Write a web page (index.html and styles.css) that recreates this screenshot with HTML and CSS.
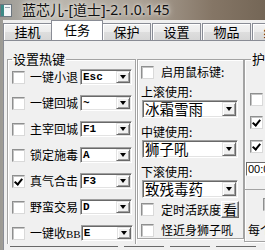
FILE: index.html
```html
<!DOCTYPE html>
<html lang="zh-CN">
<head>
  <meta charset="UTF-8">
  <title>蓝芯儿</title>
  <link rel="stylesheet" href="styles.css">
</head>
<body>
  <div class="window">
    <div class="titlebar">
      <svg class="app-icon" width="12" height="13" viewBox="0 0 12 13">
        <rect x="0.5" y="0.5" width="11" height="12" fill="#f4f6f8" stroke="#6d7780"/>
        <rect x="1" y="1" width="3" height="11" fill="#3d8a86"/>
        <rect x="5" y="3" width="5" height="1" fill="#9aa6b0"/>
      </svg>
      <span class="title">蓝芯儿-[道士]-2.1.0.145</span>
    </div>

    <div class="client">
      <div class="tabs">
        <div class="tab">挂机</div>
        <div class="tab active">任务</div>
        <div class="tab">保护</div>
        <div class="tab">设置</div>
        <div class="tab">物品</div>
        <div class="tab">组队</div>
      </div>

      <div class="page">
        <fieldset class="group hotkeys">
          <legend>设置热键</legend>
          <div class="row"><span class="check"></span><span class="label">一键小退</span><span class="combo key"><span class="val">Esc</span><span class="drop"></span></span></div>
          <div class="row"><span class="check"></span><span class="label">一键回城</span><span class="combo key"><span class="val">~</span><span class="drop"></span></span></div>
          <div class="row"><span class="check"></span><span class="label">主宰回城</span><span class="combo key"><span class="val">F1</span><span class="drop"></span></span></div>
          <div class="row"><span class="check"></span><span class="label">锁定施毒</span><span class="combo key"><span class="val">A</span><span class="drop"></span></span></div>
          <div class="row"><span class="check on"></span><span class="label">真气合击</span><span class="combo key"><span class="val">F3</span><span class="drop"></span></span></div>
          <div class="row"><span class="check"></span><span class="label">野蛮交易</span><span class="combo key"><span class="val">D</span><span class="drop"></span></span></div>
          <div class="row"><span class="check"></span><span class="label">一键收<span class="latin">BB</span></span><span class="combo key"><span class="val">E</span><span class="drop"></span></span></div>
        </fieldset>

        <fieldset class="group mouse">
          <div class="row-m first"><span class="check"></span><span class="label">启用鼠标键:</span></div>
          <div class="caption">上滚使用:</div>
          <span class="combo skill"><span class="val">冰霜雪雨</span><span class="drop"></span></span>
          <div class="caption">中键使用:</div>
          <span class="combo skill"><span class="val">狮子吼</span><span class="drop"></span></span>
          <div class="caption">下滚使用:</div>
          <span class="combo skill"><span class="val">致残毒药</span><span class="drop"></span></span>
          <div class="row-m timer"><span class="check"></span><span class="label">定时活跃度</span><span class="btn-look">看</span></div>
          <div class="row-m"><span class="check"></span><span class="label">怪近身狮子吼</span></div>
        </fieldset>

        <fieldset class="group protect">
          <legend>护理</legend>
          <span class="check p1"></span>
          <span class="check on p2"></span>
          <span class="check on p3"></span>
          <span class="edit">00:00</span>
          <div class="sub">
            <span class="check small"></span>
            <div class="sub-text">每个</div>
          </div>
        </fieldset>
      </div>

      <div class="buttons">
        <span class="button wide"></span>
        <span class="button"></span>
        <span class="button"></span>
        <span class="button"></span>
      </div>
    </div>
  </div>
</body>
</html>
```

FILE: styles.css
```css
body {
  margin: 0;
  width: 265px;
  height: 250px;
  overflow: hidden;
  font-family: "Noto Sans CJK SC", "Noto Sans", sans-serif;
  color: #000;
}
.window {
  height: 250px;
  display: flex;
  flex-direction: column;
  overflow: hidden;
  background: linear-gradient(90deg, #9c9a94 0%, #bcb8b0 20%, #a89e92 55%, #857666 80%, #746656 100%);
}
.titlebar {
  height: 20px;
  display: flex;
  align-items: center;
  flex-shrink: 0;
}
.app-icon {
  margin: 0 10px 0 0;
}
.title {
  font-family: "Noto Sans", "Noto Sans CJK SC", sans-serif;
  font-size: 14px;
  line-height: 16px;
  color: #101010;
  text-shadow: 0 0 6px #f4f2ee, 0 0 3px #eceae4;
}
.client {
  flex: 1;
  margin-left: 3px;
  display: flex;
  flex-direction: column;
  min-height: 0;
  min-width: 0;
  overflow: hidden;
}

/* tab strip */
.tabs {
  height: 20px;
  display: flex;
  align-items: flex-end;
  flex-shrink: 0;
  overflow: hidden;
  background: #f0f0f0;
}
.tab {
  width: 47px;
  height: 16px;
  margin-right: 1px;
  flex-shrink: 0;
  border: 1px solid #898c95;
  border-bottom: none;
  background: linear-gradient(#f3f3f3, #ebebeb 50%, #dedede 51%, #d6d6d6);
  box-shadow: inset 1px 1px #fff;
  font-size: 13px;
  line-height: 16px;
  text-align: center;
}
.tab.active {
  height: 19px;
  width: 50px;
  margin: 0 -1px 0 -2px;
  background: #fff;
  box-shadow: none;
  position: relative;
  z-index: 1;
  line-height: 18px;
}

/* tab page */
.page {
  flex: 1;
  min-height: 0;
  display: flex;
  align-items: flex-start;
  overflow: hidden;
  background: #f0f0f0;
  border-top: 1px solid #898c95;
  border-left: 1px solid #898c95;
  padding: 11px 0 0 3px;
}
.group {
  margin: 0;
  padding: 0;
  min-width: 0;
  box-sizing: border-box;
  flex-shrink: 0;
  border: 1px solid #a3a3a3;
  box-shadow: 1px 1px #fff, inset 1px 1px #fff;
}
.group legend {
  padding: 0 1px;
  font-size: 13px;
  line-height: 14px;
  height: 14px;
}
.hotkeys {
  width: 129px;
  height: 197px;
  padding: 0 3px 0 4px;
}
.mouse {
  width: 107px;
  margin: 7px 0 0 1px;
  height: 180px;
  padding: 0 4px 0 3px;
  display: flex;
  flex-direction: column;
}
.protect {
  width: 40px;
  height: 190px;
  padding: 0 0 0 4px;
  display: flex;
  flex-direction: column;
  align-items: flex-start;
}
.protect legend {
  margin-left: 2px;
}

/* hotkey rows */
.row {
  height: 26px;
  display: flex;
  align-items: center;
}
.row:first-of-type {
  margin-top: -2px;
}
.check {
  width: 11px;
  height: 11px;
  flex-shrink: 0;
  background: #fff;
  border: 1px solid;
  border-color: #8e8f8f #d9d9d9 #d9d9d9 #8e8f8f;
  box-shadow: inset 1px 1px #c4c4c4;
  position: relative;
}
.check.on::after {
  content: "";
  position: absolute;
  left: 3px;
  top: 1px;
  width: 3px;
  height: 6px;
  border: solid #000;
  border-width: 0 2px 2px 0;
  transform: rotate(40deg);
}
.label {
  font-size: 12px;
  line-height: 14px;
  margin-left: 5px;
  white-space: nowrap;
}
.latin {
  font-family: "Liberation Serif", serif;
  font-size: 11px;
}
.combo {
  display: flex;
  align-items: stretch;
  flex-shrink: 0;
  box-sizing: border-box;
  background: #fff;
  border: 1px solid;
  border-color: #a0a0a0 #fff #fff #a0a0a0;
  box-shadow: inset 1px 1px #696969, inset -1px -1px #e3e3e3;
}
.combo .val {
  flex: 1;
  white-space: nowrap;
  padding-left: 2px;
}
.combo.key {
  width: 52px;
  height: 16px;
  margin-left: auto;
}
.combo.key .val {
  font-family: "Liberation Mono", monospace;
  font-size: 11px;
  font-weight: bold;
  line-height: 14px;
}
.drop {
  width: 14px;
  margin: 1px;
  flex-shrink: 0;
  box-sizing: border-box;
  background: #f0f0f0;
  border: 1px solid;
  border-color: #e3e3e3 #696969 #696969 #e3e3e3;
  box-shadow: inset 1px 1px #fff, inset -1px -1px #a0a0a0;
  display: flex;
  align-items: center;
  justify-content: center;
}
.drop::after {
  content: "";
  border-left: 3.5px solid transparent;
  border-right: 3.5px solid transparent;
  border-top: 4px solid #000;
}

/* mouse group */
.row-m {
  display: flex;
  align-items: center;
  height: 16px;
}
.row-m.first {
  margin-top: 4px;
}
.row-m .label {
  margin-left: 7px;
}
.caption {
  font-size: 12px;
  line-height: 16px;
  height: 16px;
  margin-top: 6px;
}
.row-m.first + .caption {
  margin-top: 4px;
}
.combo.skill {
  width: 96px;
  height: 18px;
  margin-left: 1px;
}
.combo.skill .val {
  font-size: 14.5px;
  line-height: 16px;
}
.row-m.timer {
  margin-top: 3px;
  height: 17px;
}
.row-m.timer + .row-m {
  margin-top: 4px;
}
.btn-look {
  margin-left: auto;
  width: 18px;
  height: 17px;
  box-sizing: border-box;
  border: 1px solid;
  border-color: #fff #696969 #696969 #fff;
  box-shadow: inset -1px -1px #a0a0a0;
  font-size: 14px;
  line-height: 15px;
  text-align: center;
}

/* protect group */
.protect .check {
  margin-left: 1px;
}
.protect .p1 {
  margin-top: 27px;
}
.protect .p2 {
  margin-top: 10px;
}
.protect .p3 {
  margin-top: 11px;
}
.edit {
  margin: 9px 0 0 -3px;
  width: 40px;
  height: 14px;
  box-sizing: border-box;
  background: #fff;
  border: 1px solid;
  border-color: #696969 #fff #fff #696969;
  font-family: "Liberation Sans", sans-serif;
  font-size: 11px;
  line-height: 12px;
  padding-left: 1px;
}
.sub {
  margin: 13px 0 0 -4px;
  width: 40px;
  border-top: 1px solid #a3a3a3;
  height: 60px;
}
.sub .check.small {
  display: block;
  margin: 8px 0 0 18px;
}
.sub-text {
  font-size: 12px;
  margin: 10px 0 0 3px;
}

/* bottom buttons */
.buttons {
  height: 6px;
  flex-shrink: 0;
  background: #f0f0f0;
  border-left: 1px solid #898c95;
  display: flex;
  gap: 6px;
  padding-left: 6px;
  align-items: flex-end;
}
.button {
  width: 40px;
  height: 3px;
  border-top: 1px solid #696969;
}
.button.wide {
  width: 108px;
}
```
